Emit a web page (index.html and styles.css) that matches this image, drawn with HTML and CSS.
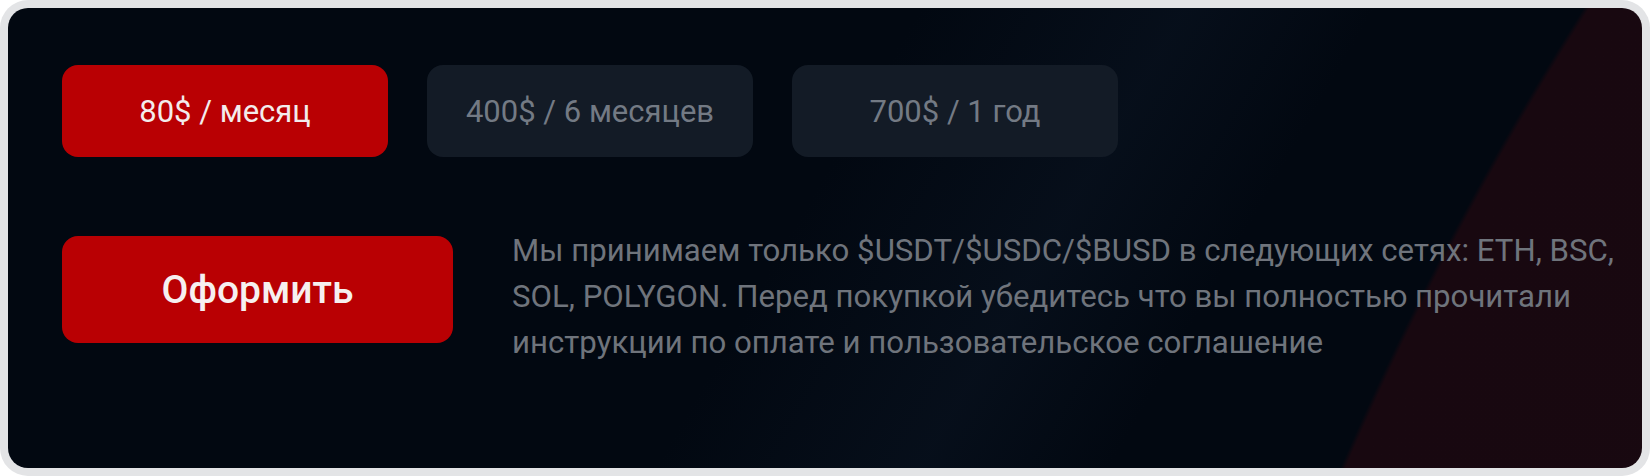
FILE: index.html
```html
<!DOCTYPE html>
<html lang="ru">
<head>
<meta charset="utf-8">
<title>Подписка</title>
<link rel="stylesheet" href="styles.css">
</head>
<body>
<div class="frame">
  <section class="card">
    <div class="plans">
      <button class="plan plan--active">80$ / месяц</button>
      <button class="plan">400$ / 6 месяцев</button>
      <button class="plan">700$ / 1 год</button>
    </div>
    <div class="checkout">
      <button class="submit">Оформить</button>
      <p class="note">Мы принимаем только $USDT/$USDC/$BUSD в следующих сетях: ETH, BSC, SOL, POLYGON. Перед покупкой убедитесь что вы полностью прочитали инструкции по оплате и пользовательское соглашение</p>
    </div>
  </section>
</div>
</body>
</html>
```

FILE: styles.css
```css
* { box-sizing: border-box; }
html, body { margin: 0; padding: 0; background: #ffffff; }
body { font-family: Roboto, "Noto Sans", sans-serif; }

.frame {
  width: 1650px;
  height: 476px;
  padding: 8px;
  background: #e3e4e6;
  border-radius: 28px;
}

.card {
  height: 460px;
  border-radius: 20px;
  padding: 57px 10px 0 54px;
  background:
    radial-gradient(circle 3296px at 4358px 1767px, #1c0a11 0, #180810 99.85%, rgba(23,8,16,0) 100%),
    linear-gradient(120deg, rgba(8,16,28,0) 0, rgba(8,16,28,0) 48%, rgba(10,20,34,0.55) 62%, rgba(8,16,28,0) 72%),
    #020811;
  display: flex;
  flex-direction: column;
  gap: 79px;
}

.plans {
  display: flex;
  gap: 39px;
}

.plan {
  width: 326px;
  height: 92px;
  border: 0;
  border-radius: 16px;
  background: #131b26;
  color: #737a84;
  font-family: Roboto, sans-serif;
  font-size: 31px;
  font-weight: 400;
  padding: 0;
}

.plan--active {
  background: #b90003;
  color: #f3ecec;
}

.checkout {
  display: flex;
  align-items: flex-start;
  gap: 59px;
}

.submit {
  flex: none;
  width: 391px;
  height: 107px;
  border: 0;
  border-radius: 16px;
  background: #b90003;
  color: #f6f0f0;
  font-family: Roboto, sans-serif;
  font-size: 39px;
  font-weight: 500;
  padding: 0;
}

.note {
  margin: -8px 0 0 0;
  max-width: 1120px;
  color: #6f747c;
  font-size: 31.2px;
  line-height: 46px;
}
```
